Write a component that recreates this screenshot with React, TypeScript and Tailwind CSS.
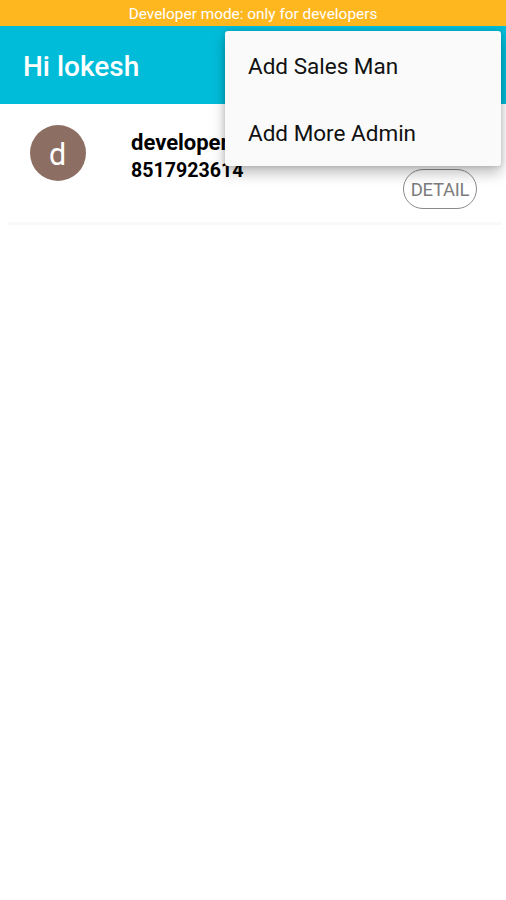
const menuItems = ["Add Sales Man", "Add More Admin"];

const admins = [{ name: "developer", phone: "8517923614" }];

function AdminRow({ name, phone }: { name: string; phone: string }) {
  return (
    <div className="ml-2 mr-1 flex h-[121px] border-b-[3px] border-[#f9f9f9]">
      <div className="ml-[22px] mt-[21px] flex size-14 items-center justify-center rounded-full bg-[#8d6e63] pr-px pt-1 text-[30.5px] text-white">
        {name[0]}
      </div>
      <div className="ml-[45px] mt-[24px] flex-1 font-bold text-black">
        <p className="text-[22px] leading-[29px]">{name}</p>
        <p className="text-[19.6px] leading-7">{phone}</p>
      </div>
      <button className="mr-[25px] mt-[65px] h-10 w-[74px] rounded-full border border-[#8a8a8a] pt-1 text-[18.5px] tracking-[-0.3px] text-[#7c7c7c]">
        DETAIL
      </button>
    </div>
  );
}

export default function App() {
  return (
    <div className="relative h-[900px] w-[506px] overflow-hidden bg-white font-['Roboto',sans-serif]">
      <div className="h-[26px] bg-[#ffb71f] text-center text-[15.4px] leading-[29px] text-white">
        Developer mode: only for developers
      </div>
      <header className="flex h-[78px] items-center bg-[#00bcd8] pl-[23px] pt-1">
        <h1 className="text-[28px] font-medium text-white">Hi lokesh</h1>
      </header>

      {admins.map((admin) => (
        <AdminRow key={admin.phone} {...admin} />
      ))}

      {/* Overflow menu */}
      <div className="absolute left-[225px] top-[31px] w-[276px] rounded-[3px] bg-[#fafafa] pt-px shadow-[0_7px_14px_rgba(0,0,0,0.26),0_0_5px_rgba(0,0,0,0.16)]">
        {menuItems.map((item) => (
          <div key={item} className="flex h-[67px] items-center pl-[23px] pt-[3px] text-[22.5px] text-[#111]">
            {item}
          </div>
        ))}
      </div>
    </div>
  );
}
